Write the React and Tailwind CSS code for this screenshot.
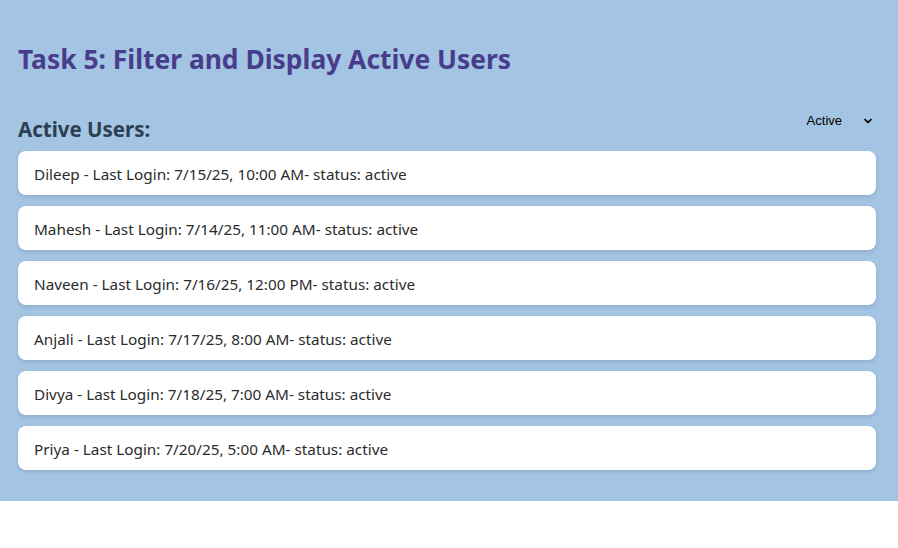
import { ChevronDown } from "lucide-react";

const users = [
  { name: "Dileep", login: "7/15/25, 10:00 AM" },
  { name: "Mahesh", login: "7/14/25, 11:00 AM" },
  { name: "Naveen", login: "7/16/25, 12:00 PM" },
  { name: "Anjali", login: "7/17/25, 8:00 AM" },
  { name: "Divya", login: "7/18/25, 7:00 AM" },
  { name: "Priya", login: "7/20/25, 5:00 AM" },
];

export default function App() {
  return (
    <div className="bg-white min-h-[548px] font-['Noto_Sans',sans-serif]">
      <div className="bg-[#a4c4e4] pl-[18px] pr-[22px] pt-[40px] pb-[31px]">
        <h1 className="text-[26.4px] font-bold text-[#483d8b] leading-[38px]">
          Task 5: Filter and Display Active Users
        </h1>

        {/* header row with filter */}
        <div className="flex items-start justify-between mt-[33px]">
          <h2 className="text-[20.5px] font-bold text-[#2c3e50] mt-[3px] leading-[30px]">
            Active Users:
          </h2>
          <div className="flex items-center gap-[20px] pr-[2px] font-['Liberation_Sans',sans-serif] text-[13px] text-black">
            <span>Active</span>
            <ChevronDown className="w-[12px] h-[12px]" strokeWidth={3.5} />
          </div>
        </div>

        <ul className="mt-[7px] flex flex-col gap-[11px]">
          {users.map((u) => (
            <li
              key={u.name}
              className="bg-white rounded-[8px] h-[44px] flex items-center px-[16px] pt-[2px] text-[15.3px] text-[#2b2b2b] shadow-[0_2px_4px_rgba(0,0,0,0.12)]"
            >
              {u.name} - Last Login: {u.login}- status: active
            </li>
          ))}
        </ul>
      </div>
    </div>
  );
}
